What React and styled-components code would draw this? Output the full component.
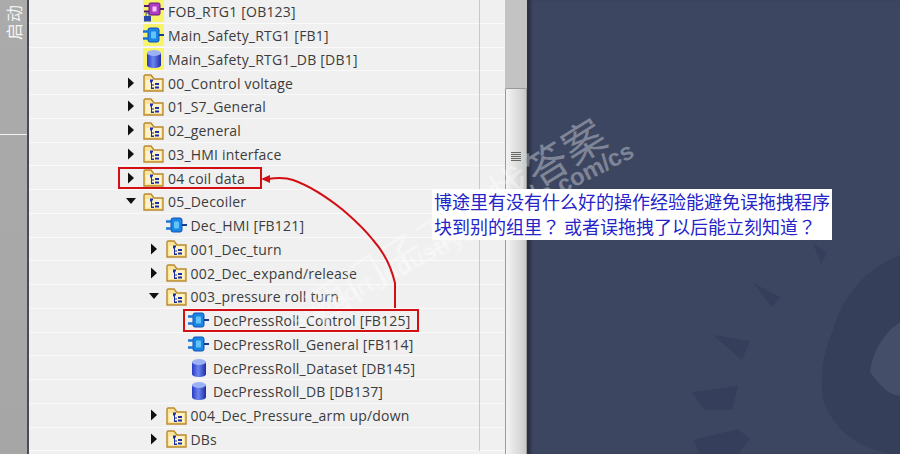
import React from "react";
import styled, { createGlobalStyle } from "styled-components";

const Global = createGlobalStyle`
  html, body { margin: 0; padding: 0; width: 900px; height: 454px; overflow: hidden; background: #3c4661; }
`;
const Page = styled.div`
  position: relative; width: 900px; height: 454px; overflow: hidden; display: flex;
  font-family: "Open Sans", "Noto Sans", sans-serif;
`;
const Rail = styled.aside`
  width: 27px; flex: none; background: linear-gradient(#ababab, #a6a6a6);
  border-right: 2px solid #4a4c55; display: flex; flex-direction: column;
`;
const RailTab = styled.div`
  height: 134px; flex: none; border-bottom: 1px solid #f2f2f2;
  display: flex; justify-content: center; align-items: flex-start;
`;
const RailLabel = styled.span`
  writing-mode: vertical-rl; text-orientation: sideways; transform: rotate(180deg); color: #f4f4f4; font-size: 17px; line-height: 20px;
  font-family: "Noto Sans CJK SC", sans-serif; margin-top: 4px; letter-spacing: 1px;
`;
const Tree = styled.main`
  width: 476px; flex: none; background: #f0f0f0; display: grid; grid-auto-rows: 23.75px; align-content: start;
`;
const Row = styled.div`
  display: grid; grid-template-columns: 450px 1fr; background: #f0f0f0; border-bottom: 1px solid #fafafa; box-sizing: border-box;
`;
const NameCell = styled.div`
  display: flex; align-items: center; padding-left: ${p => 74.5 + p.$level * 22.5}px; white-space: nowrap;
`;
const ExtraCell = styled.div`
  border-left: 1px solid #c9c9c9; margin-bottom: -1px;
`;
const Arrow = styled.span`
  width: 17px; height: 14px; flex: none; display: flex; align-items: center; justify-content: flex-start;
`;
const IconSlot = styled.span`
  width: 21px; height: 22px; flex: none; margin-right: 4px; display: flex; align-items: center; justify-content: center;
  background: ${p => (p.$hl ? "#f7f36a" : "transparent")};
`;
const Label = styled.span`
  font-size: 14px; color: #3c3c3c; letter-spacing: 0.2px; line-height: 20px; position: relative; top: 1px;
`;
const Scroll = styled.div`
  width: 22px; flex: none; background: #c3c3c3; display: flex; flex-direction: column; padding-top: 88px; box-sizing: border-box;
`;
const Thumb = styled.div`
  flex: 1; background: linear-gradient(90deg, #f4f4f4, #d4d4d4 80%, #c8c8c8); border: 1px solid #9a9a9a; border-bottom: none;
  border-radius: 2px 2px 0 0; display: flex; justify-content: center; padding-top: 63px;
`;
const Grip = styled.div`
  width: 10px; height: 9px;
  background: repeating-linear-gradient(#666 0 1px, #ddd 1px 2px);
`;
const Workspace = styled.section`
  flex: 1; position: relative; background: #3c4661; border-left: 2px solid #2b3040; box-shadow: inset 3px 0 3px -1px #2e3448; overflow: hidden;
`;
const Gear = styled.svg`
  position: absolute; left: 0; top: 0;
`;
const Overlay = styled.svg`
  position: absolute; left: 0; top: 0; pointer-events: none;
`;
const RedBox = styled.div`
  position: absolute; border: 2.5px solid #d40f14; box-sizing: border-box;
  left: ${p => p.$x}px; top: ${p => p.$y}px; width: ${p => p.$w}px; height: ${p => p.$h}px;
`;
const Note = styled.div`
  position: absolute; left: 432px; top: 189px; width: 400px; height: 51px; background: #fff; color: #2424c8;
  font-family: "Noto Sans CJK SC", sans-serif; font-size: 18px; line-height: 25px; padding: 0 0 0 2px; box-sizing: border-box; white-space: nowrap;
`;
const Q = styled.span`
  font-family: "Noto Sans CJK JP", sans-serif;
`;
const Mark = styled.div`
  position: absolute; right: ${p => p.$r}px; top: ${p => p.$y}px; transform: rotate(${p => p.$deg}deg); transform-origin: right center;
  color: rgba(255,255,255,${p => p.$a}); font-size: ${p => p.$s}px; font-weight: ${p => p.$w}; white-space: nowrap;
  font-family: "Liberation Sans", "Noto Sans CJK SC", sans-serif; line-height: 1; letter-spacing: ${p => p.$ls}px;
`;

const Tri = ({ open }) => (
  <svg width="10" height="12" viewBox="0 0 10 12">
    {open ? <path d="M0 3h10L5 9z" fill="#111" /> : <path d="M2 0.5l6 5.500-6 5.500z" fill="#111" />}
  </svg>
);
const Folder = () => (
  <svg width="21" height="19" viewBox="0 0 21 19">
    <path d="M1 3V18h19V6H11L8 2H2z" fill="#fbe39a" stroke="#b98a2e" strokeWidth="1.4" />
    <path d="M3 7h15v9H3z" fill="#fdf3c8" />
    <path d="M7 6.500h3v2H9v3h2v1H9v2h2v1.500H8v-6.500H7z" fill="#1b2fa8" />
    <path d="M12 10h4v2h-4zM12 13.500h4v2h-4z" fill="#1b2fa8" />
  </svg>
);
const Block = () => (
  <svg width="21" height="16" viewBox="0 0 21 16">
    <rect x="5" y="1" width="11" height="14" rx="2" fill="#1a86e4" stroke="#1250b4" strokeWidth="1" />
    <rect x="8" y="4.500" width="5" height="7" rx="1" fill="#62c4fb" />
    <path d="M0 4.500h5M0 11.500h5" stroke="#1a74d8" strokeWidth="2.500" />
    <path d="M16 8h5" stroke="#12408f" strokeWidth="2" />
  </svg>
);
const Ob = () => (
  <svg width="21" height="21" viewBox="0 0 21 21">
    <rect x="6" y="2" width="11" height="12" rx="1.500" fill="#b13bc4" stroke="#5a1a78" strokeWidth="1" />
    <rect x="9.500" y="5.500" width="4" height="5" fill="#f3c7f7" />
    <path d="M1 5h5M1 10.500h5M17 8h4" stroke="#4d1a70" strokeWidth="2" />
    <rect x="1" y="15" width="7" height="5.500" fill="#2b4aa8" />
    <path d="M3 15v-1.500a1.500 1.500 0 013 0V15" fill="none" stroke="#2b4aa8" />
  </svg>
);
const Db = () => (
  <svg width="16" height="20" viewBox="0 0 16 20">
    <defs><linearGradient id="db" x1="0" x2="1" y1="0" y2="0"><stop offset="0" stopColor="#2a3bc8" /><stop offset="0.45" stopColor="#6d86ee" /><stop offset="1" stopColor="#1f2ba8" /></linearGradient></defs>
    <path d="M1 4v12c0 2 3 3 7 3s7-1 7-3V4z" fill="url(#db)" />
    <ellipse cx="8" cy="4" rx="7" ry="3" fill="#9db2f4" />
  </svg>
);

const rows = [
  { level: 1, kind: "ob", hl: true, text: "FOB_RTG1 [OB123]" },
  { level: 1, kind: "fb", hl: true, text: "Main_Safety_RTG1 [FB1]" },
  { level: 1, kind: "db", hl: true, text: "Main_Safety_RTG1_DB [DB1]" },
  { level: 1, kind: "dir", a: "r", text: "00_Control voltage" },
  { level: 1, kind: "dir", a: "r", text: "01_S7_General" },
  { level: 1, kind: "dir", a: "r", text: "02_general" },
  { level: 1, kind: "dir", a: "r", text: "03_HMI interface" },
  { level: 1, kind: "dir", a: "r", text: "04 coil data" },
  { level: 1, kind: "dir", a: "d", text: "05_Decoiler" },
  { level: 2, kind: "fb", text: "Dec_HMI [FB121]" },
  { level: 2, kind: "dir", a: "r", text: "001_Dec_turn" },
  { level: 2, kind: "dir", a: "r", text: "002_Dec_expand/release" },
  { level: 2, kind: "dir", a: "d", text: "003_pressure roll turn" },
  { level: 3, kind: "fb", text: "DecPressRoll_Control [FB125]" },
  { level: 3, kind: "fb", text: "DecPressRoll_General [FB114]" },
  { level: 3, kind: "db", text: "DecPressRoll_Dataset [DB145]" },
  { level: 3, kind: "db", text: "DecPressRoll_DB [DB137]" },
  { level: 2, kind: "dir", a: "r", text: "004_Dec_Pressure_arm up/down" },
  { level: 2, kind: "dir", a: "r", text: "DBs" },
];
const icons = { ob: <Ob />, fb: <Block />, db: <Db />, dir: <Folder /> };

export default function App() {
  return (
    <Page>
      <Global />
      <Rail>
        <RailTab><RailLabel>启动</RailLabel></RailTab>
      </Rail>
      <Tree>
        {rows.map(r => (
          <Row key={r.text}>
            <NameCell $level={r.level}>
              <Arrow>{r.a && <Tri open={r.a === "d"} />}</Arrow>
              <IconSlot $hl={r.hl}>{icons[r.kind]}</IconSlot>
              <Label>{r.text}</Label>
            </NameCell>
            <ExtraCell />
          </Row>
        ))}
      </Tree>
      <Scroll>
        <Thumb><Grip /></Thumb>
      </Scroll>
      <Workspace>
        <Gear width="371" height="454" viewBox="529 0 371 454">
          <path d="M900 255a110 110 0 00-67 75 130 130 0 00-10 70c10 30 40 54 77 54z" fill="#363f5a" />
          <path d="M900 322a70 70 0 00-30 50c15 20 20 22 30 24z" fill="#444e68" />
          <path d="M753 283l27 14-8 10zM713 335l37 6-8 19zM692 392l46-6-6 24h-28zM693 440l45-11 12 10-12 15h-38zM813 243l14 10-6 11z" fill="#353e5a" />
        </Gear>
      </Workspace>
      <Mark $r={297} $y={110} $s={42} $a={0.36} $w={400} $ls={1} $deg={-32}>西门子工业找答案</Mark>
      <Mark $r={268} $y={137} $s={24} $a={0.34} $w={700} $ls={0} $deg={-27}>support.industry.siemens.com/cs</Mark>
      <Overlay width="900" height="454" viewBox="0 0 900 454">
        <path d="M395 308V283C390 262 382 250 373 240C362 226 352 218 343 210C328 198 310 186 293 180C284 177 275 178 268 179" fill="none" stroke="#d40f14" strokeWidth="2" />
        <path d="M261 179l9-4v8z" fill="#d40f14" />
      </Overlay>
      <RedBox $x={118} $y={167} $w={144} $h={22} />
      <RedBox $x={183} $y={309} $w={236} $h={23} />
      <Note>博途里有没有什么好的操作经验能避免误拖拽程序<br />块到别的组里<Q>？</Q> 或者误拖拽了以后能立刻知道<Q>？</Q></Note>
    </Page>
  );
}
